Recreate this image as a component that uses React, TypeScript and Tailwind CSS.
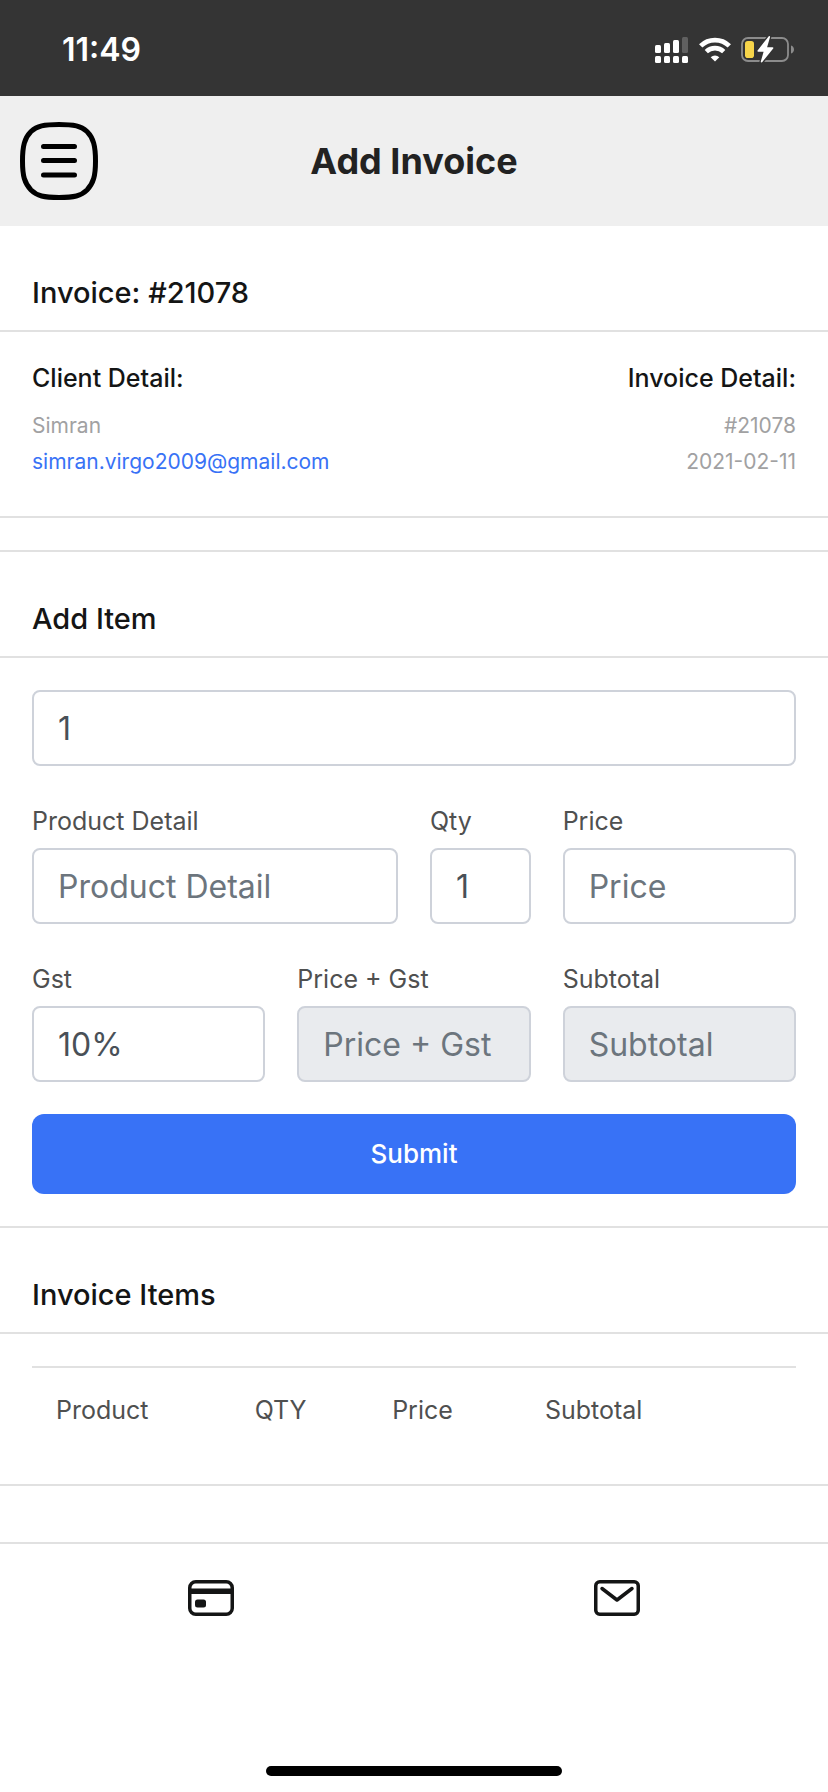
import type { ReactNode } from "react";

interface FieldProps {
  id: string;
  label: string;
  className: string;
  placeholder?: string;
  defaultValue?: string;
  disabled?: boolean;
}

const inputClass =
  "block h-[76px] w-full min-w-0 rounded-lg border-2 border-[#ced2da] bg-white px-6 text-[32px] text-[#495057] placeholder:text-[#6c757d] placeholder:opacity-100 disabled:bg-[#e9ebee]";

const columns = [
  { label: "Product", width: "w-[26%]" },
  { label: "QTY", width: "w-[18%]" },
  { label: "Price", width: "w-[20%]" },
  { label: "Subtotal", width: "w-[24%]" },
];

function StatusBar() {
  return (
    <div className="flex h-24 items-center justify-between bg-[#343434] pt-1 pr-[34px] pl-[62px] text-white">
      <span className="text-[32px] leading-10 font-semibold">11:49</span>
      <div className="flex items-center gap-[10px]">
        <svg width="34" height="26" viewBox="0 0 34 26" fill="currentColor" aria-hidden="true">
          <rect x="0" y="8" width="6" height="8" rx="1.5" />
          <rect x="9" y="6" width="6" height="10" rx="1.5" />
          <rect x="18" y="3" width="6" height="13" rx="1.5" />
          <rect x="27" y="0" width="6" height="16" rx="1.5" opacity="0.22" />
          <rect x="0" y="19" width="6" height="7" rx="1.5" />
          <rect x="9" y="19" width="6" height="7" rx="1.5" />
          <rect x="18" y="19" width="6" height="7" rx="1.5" />
          <rect x="27" y="19" width="6" height="7" rx="1.5" />
        </svg>
        <svg width="32" height="26" viewBox="0 0 32 26" fill="none" stroke="currentColor" aria-hidden="true">
          <path d="M1.7 8.9A20.5 20.5 0 0 1 30.3 8.9" strokeWidth="4.8" />
          <path d="M7.3 14.6A12.5 12.5 0 0 1 24.7 14.6" strokeWidth="4.6" />
          <path d="M16 24.5L11.7 20.2A6.2 6.2 0 0 1 20.3 20.2Z" fill="currentColor" stroke="none" />
        </svg>
        <svg width="53" height="28" viewBox="0 0 53 28" aria-hidden="true">
          <rect x="1" y="2" width="46" height="23" rx="6" fill="none" stroke="#8c8c8c" strokeWidth="1.8" />
          <path d="M50 9.5C51.8 10 53 11.6 53 13.5S51.8 17 50 17.5Z" fill="#8c8c8c" />
          <rect x="4" y="5" width="9" height="17" rx="2.8" fill="#f7d54a" />
          <path
            d="M27.6 .4L16.6 14.4C16.1 15 16.5 15.7 17.2 15.7H22.6L19.8 25.4C19.5 26.5 20.6 27 21.3 26.1L32.2 12.6C32.7 11.9 32.3 11.2 31.5 11.2H26.1L29 1.2C29.3 .1 28.3-.4 27.6 .4Z"
            fill="#fff"
            stroke="#343434"
            strokeWidth="2.6"
            paintOrder="stroke"
          />
        </svg>
      </div>
    </div>
  );
}

function MenuIcon() {
  return (
    <svg width="78" height="78" viewBox="0 0 78 78" fill="none" stroke="#000" strokeWidth="5" strokeLinecap="round" aria-hidden="true">
      <path d="M39 2.5C54 2.5 61 4 67 9.500C73.500 16 75.500 24 75.500 39S73.500 61 67 68C61 74 54 75.500 39 75.500S17 74 11 68C4.500 61 2.500 54 2.500 39S4.500 16 11 9.500C17 4 24 2.500 39 2.500Z" />
      <path d="M23.500 24.500H54.500M23.500 38.500H54.500M23.500 53H54.500" />
    </svg>
  );
}

function SectionTitle({ children }: { children: ReactNode }) {
  return (
    <h2 className="border-b-2 border-[#e1e1e1] px-8 pt-12 pb-[18px] text-[29px] leading-[38px] font-medium text-[#141515]">
      {children}
    </h2>
  );
}

function Field({ id, label, className, ...input }: FieldProps) {
  return (
    <div className={`px-4 ${className}`}>
      <label htmlFor={id} className="mb-[9px] block text-[25px] leading-9 text-[#4f5050]">
        {label}
      </label>
      <input id={id} type="text" className={inputClass} {...input} />
    </div>
  );
}

export default function App() {
  return (
    <div className="flex min-h-screen flex-col bg-white font-['Inter',sans-serif]">
      <StatusBar />

      <header className="grid h-[130px] grid-cols-[1fr_auto_1fr] items-center bg-[#efefef] px-5">
        <button type="button" aria-label="Menu" className="justify-self-start">
          <MenuIcon />
        </button>
        <h1 className="text-[36px] leading-12 font-bold text-[#222]">Add Invoice</h1>
      </header>

      <main>
        <section className="border-b-2 border-[#e1e1e1]">
          <SectionTitle>Invoice: #21078</SectionTitle>
          <div className="flex justify-between px-8 pt-7 pb-9 text-[21px] leading-9 text-[#a1a1a2]">
            <div>
              <h3 className="mb-3 text-[25px] leading-9 font-medium text-[#141515]">Client Detail:</h3>
              <p>Simran</p>
              <a href="mailto:simran.virgo2009@gmail.com" className="block text-[#3872f6]">
                simran.virgo2009@gmail.com
              </a>
            </div>
            <div className="text-right">
              <h3 className="mb-3 text-[25px] leading-9 font-medium text-[#141515]">Invoice Detail:</h3>
              <p>#21078</p>
              <p>2021-02-11</p>
            </div>
          </div>
        </section>

        <section className="mt-8 border-y-2 border-[#e1e1e1]">
          <SectionTitle>Add Item</SectionTitle>
          <form className="px-8 py-8" onSubmit={(event) => event.preventDefault()}>
            <input type="text" aria-label="Item number" defaultValue="1" className={inputClass} />
            <div className="-mx-4 mt-[37px] grid grid-cols-12 gap-y-[37px]">
              <Field id="product" label="Product Detail" placeholder="Product Detail" className="col-span-6" />
              <Field id="qty" label="Qty" defaultValue="1" className="col-span-2" />
              <Field id="price" label="Price" placeholder="Price" className="col-span-4" />
              <Field id="gst" label="Gst" defaultValue="10%" className="col-span-4" />
              <Field id="price-gst" label="Price + Gst" placeholder="Price + Gst" className="col-span-4" disabled />
              <Field id="subtotal" label="Subtotal" placeholder="Subtotal" className="col-span-4" disabled />
            </div>
            <button
              type="submit"
              className="mt-8 h-20 w-full rounded-xl bg-[#3872f6] pb-0.5 text-[26px] font-medium text-white"
            >
              Submit
            </button>
          </form>
        </section>

        <section className="border-b-2 border-[#e1e1e1]">
          <SectionTitle>Invoice Items</SectionTitle>
          <div className="px-8 py-8">
            <table className="w-full table-fixed border-t-2 border-[#e1e1e1] text-left text-[25px] leading-9 text-[#4f5050]">
              <thead>
                <tr>
                  {columns.map((column) => (
                    <th key={column.label} scope="col" className={`py-6 pl-6 font-normal ${column.width}`}>
                      {column.label}
                    </th>
                  ))}
                  <td />
                </tr>
              </thead>
            </table>
          </div>
        </section>
      </main>

      <footer className="mt-14 flex flex-1 flex-col justify-between border-t-2 border-[#e1e1e1] pb-4">
        <nav className="grid grid-cols-2 px-2 pt-9">
          <a href="#invoices" aria-label="Invoices" className="justify-self-center">
            <svg width="46" height="36" viewBox="0 0 46 36" fill="none" stroke="#141515" strokeWidth="3.5" aria-hidden="true">
              <rect x="1.750" y="1.750" width="42.500" height="32.500" rx="6" />
              <path d="M2 11.300H44" strokeWidth="5.500" />
              <rect x="7" y="19.500" width="11" height="8" rx="2.500" fill="#141515" stroke="none" />
            </svg>
          </a>
          <a href="#messages" aria-label="Messages" className="justify-self-center">
            <svg width="46" height="36" viewBox="0 0 46 36" fill="none" stroke="#141515" strokeWidth="3.5" strokeLinecap="round" strokeLinejoin="round" aria-hidden="true">
              <rect x="1.750" y="1.750" width="42.500" height="32.500" rx="4" />
              <path d="M8 8.500L23 20L38 8.500" />
            </svg>
          </a>
        </nav>
        <div className="h-[10px] w-[296px] self-center rounded-full bg-black" />
      </footer>
    </div>
  );
}
